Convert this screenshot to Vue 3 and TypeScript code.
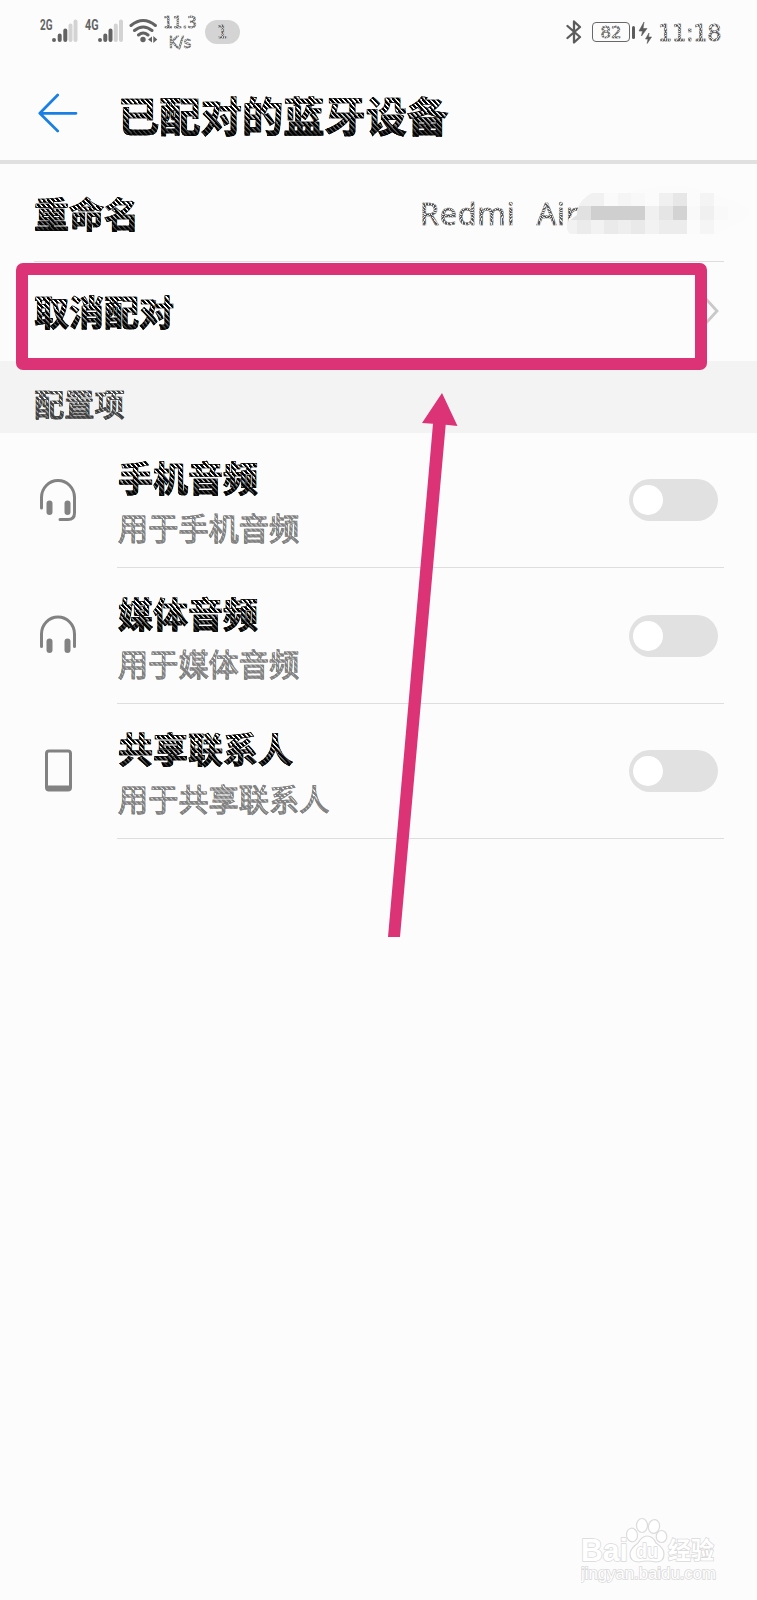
<script setup lang="ts">
import { ref } from 'vue'

interface Profile {
  id: string
  icon: 'headset' | 'headphones' | 'phone'
  title: string
  detail: string
  enabled: boolean
}

interface Cell {
  x: number
  y: number
  w: number
  h: number
  c: string
}

const profiles = ref<Profile[]>([
  { id: 'call', icon: 'headset', title: '手机音频', detail: '用于手机音频', enabled: false },
  { id: 'media', icon: 'headphones', title: '媒体音频', detail: '用于媒体音频', enabled: false },
  { id: 'contacts', icon: 'phone', title: '共享联系人', detail: '用于共享联系人', enabled: false },
])

const mosaic: Cell[] = [
  { x: 10, y: 0, w: 27, h: 13, c: '#f1f1f1' },
  { x: 37, y: 0, w: 14, h: 13, c: '#fafafa' },
  { x: 51, y: 0, w: 13, h: 13, c: '#f5f5f5' },
  { x: 64, y: 0, w: 14, h: 13, c: '#f8f8f8' },
  { x: 92, y: 0, w: 14, h: 13, c: '#f0f0f0' },
  { x: 106, y: 0, w: 14, h: 13, c: '#e7e7e7' },
  { x: 133, y: 0, w: 14, h: 13, c: '#f4f4f4' },
  { x: 0, y: 13, w: 24, h: 14, c: '#e1e1e1' },
  { x: 24, y: 13, w: 54, h: 14, c: '#cfcfcf' },
  { x: 78, y: 13, w: 14, h: 14, c: '#f0f0f0' },
  { x: 92, y: 13, w: 14, h: 14, c: '#e5e5e5' },
  { x: 106, y: 13, w: 14, h: 14, c: '#d3d3d3' },
  { x: 120, y: 13, w: 13, h: 14, c: '#f9f9f9' },
  { x: 133, y: 13, w: 14, h: 14, c: '#f0f0f0' },
  { x: 147, y: 13, w: 14, h: 14, c: '#f9f9f9' },
  { x: 0, y: 27, w: 10, h: 14, c: '#f2f2f2' },
  { x: 10, y: 27, w: 14, h: 14, c: '#ebebeb' },
  { x: 24, y: 27, w: 13, h: 14, c: '#f2f2f2' },
  { x: 37, y: 27, w: 14, h: 14, c: '#eaeaea' },
  { x: 51, y: 27, w: 13, h: 14, c: '#eeeeee' },
  { x: 64, y: 27, w: 14, h: 14, c: '#e9e9e9' },
  { x: 78, y: 27, w: 14, h: 14, c: '#f2f2f2' },
  { x: 92, y: 27, w: 28, h: 14, c: '#ececec' },
  { x: 133, y: 27, w: 14, h: 14, c: '#f5f5f5' },
]
</script>

<template>
  <div class="screen">
    <header class="status">
      <svg class="signals" width="120" height="30" viewBox="0 0 120 30">
        <g stroke-width="4" stroke-linecap="round" stroke="#636363">
          <path d="M14 22v.1M19.7 17.5v4.6M25.300 12.500v9.600" />
          <path d="M60 22v.1M65.300 17.500v4.600M70.500 12.500v9.600" />
          <path stroke="#d3d3d3" d="M30.500 7.500v14.600M35.500 3.500v18.600M75.800 7.500v14.600M81 3.500v18.600" />
        </g>
        <g fill="none" stroke="#636363" stroke-width="3" stroke-linecap="round">
          <path d="M91 7.500Q103.200-2.500 115.400 7.500M94.500 12.500Q103.200 5.500 112 12.500M98.500 17Q103.200 13 108 17" />
        </g>
        <circle cx="103" cy="21.500" r="2.700" fill="#636363" />
        <path d="M112 18.500v6l-4-3zM113.300 18v7l4-3.500z" fill="#636363" />
        <text x="0" y="11.700" class="net" textLength="12.500" lengthAdjust="spacingAndGlyphs">2G</text>
        <text x="45" y="11.700" class="net" textLength="13.500" lengthAdjust="spacingAndGlyphs">4G</text>
      </svg>
      <div class="speed"><span class="hatch-fine">11.3</span><span class="hatch-fine">K/s</span></div>
      <div class="pill"><span class="hatch-fine">1</span></div>
      <div class="spacer"></div>
      <svg class="bt" width="16" height="24" viewBox="0 0 16 24">
        <path d="M1.500 6L14 17 8 22.500V1.500L14 7 1.500 18" fill="none" stroke="#5c5c5c" stroke-width="2.300" stroke-linejoin="round" stroke-linecap="round" />
      </svg>
      <div class="battery"><span class="hatch-fine">82</span></div>
      <svg class="charge" width="20" height="22" viewBox="0 0 20 22">
        <rect x="0" y="4" width="3" height="13" rx="1.500" fill="#5c5c5c" />
        <path d="M12 0L7 9h3.500L9.500 14 15 6.500h-4zM17 11l-3.500 6h2.500l-.8 4.500L19.500 15h-3z" fill="#5c5c5c" stroke="#5c5c5c" stroke-width=".6" />
      </svg>
      <span class="clock hatch-fine">11:18</span>
    </header>

    <div class="titlebar">
      <svg class="back" width="40" height="40" viewBox="0 0 40 40">
        <path d="M38 20.300H2M19.700 2L1.800 20.300 19.700 38" fill="none" stroke="#1a7fe4" stroke-width="2.700" stroke-linecap="round" stroke-linejoin="round" />
      </svg>
      <h1 class="hatch">已配对的蓝牙设备</h1>
    </div>

    <main>
      <section class="row rename">
        <span class="label hatch">重命名</span>
        <span class="device hatch-fine">Redmi&nbsp; Air</span>
        <svg class="mosaic" width="185" height="70" viewBox="0 0 185 70">
          <path d="M10 30Q14 18 24 12H60Q100 0 132 8L178 24Q190 32 172 42L150 53H4Q-2 48 2 38Z" fill="#fbfbfb" />
          <clipPath id="smear"><path d="M0 42Q4 38 10 34 10 20 25 12H185V53H3Q-1 50 0 42Z" /></clipPath>
          <g clip-path="url(#smear)">
            <rect v-for="(cell, i) in mosaic" :key="i" :x="cell.x" :y="cell.y + 12" :width="cell.w" :height="cell.h" :fill="cell.c" />
          </g>
        </svg>
      </section>

      <section class="row unpair">
        <span class="label hatch">取消配对</span>
        <svg class="chevron" width="16" height="28" viewBox="0 0 16 28">
          <path d="M2 2l11 12L2 26" fill="none" stroke="#c9c9c9" stroke-width="2.800" />
        </svg>
      </section>

      <div class="section-head"><span class="hatch gray">配置项</span></div>

      <section v-for="p in profiles" :key="p.id" class="profile">
        <svg class="icon" width="38" height="44" viewBox="0 0 38 44">
          <template v-if="p.icon === 'headset'">
            <path d="M2.500 29V18.500a16.500 17 0 0 1 33 0V34q0 6.500-6.500 6.500H21" fill="none" stroke="#828282" stroke-width="3" stroke-linecap="round" />
            <rect x="7.500" y="21.500" width="6" height="14.500" rx="3" fill="#828282" />
            <rect x="25.500" y="21.500" width="6" height="14.500" rx="3" fill="#828282" />
          </template>
          <template v-else-if="p.icon === 'headphones'">
            <path d="M2.500 32.500V20a16.500 17 0 0 1 33 0V32.500" fill="none" stroke="#828282" stroke-width="3" stroke-linecap="round" />
            <rect x="7.500" y="24.500" width="6" height="14.500" rx="3" fill="#828282" />
            <rect x="25.500" y="24.500" width="6" height="14.500" rx="3" fill="#828282" />
          </template>
          <path v-else fill="#828282" fill-rule="evenodd" d="M10 .5h19q4 0 4 4v34q0 4-4 4H10q-4 0-4-4v-34q0-4 4-4zM10 3.500q-1 0-1 1v32h21v-32q0-1-1-1z" />
        </svg>
        <div class="body">
          <div class="texts">
            <span class="label hatch">{{ p.title }}</span>
            <span class="detail hatch light">{{ p.detail }}</span>
          </div>
          <button class="toggle" :class="{ on: p.enabled }" @click="p.enabled = !p.enabled"><i></i></button>
        </div>
      </section>
    </main>

    <div class="frame"></div>
    <svg class="arrow" width="80" height="550" viewBox="0 0 80 550">
      <path d="M62 3L77.500 36 65.700 34.800 20 547H8L53 33.800 42 33z" fill="#db3375" />
    </svg>

    <svg class="watermark" width="150" height="74" viewBox="0 0 150 74">
      <g fill="#fff" stroke="#dcdcdc" stroke-width="1.200">
        <ellipse cx="51" cy="25" rx="5.500" ry="6.800" transform="rotate(-8 51 25)" />
        <ellipse cx="61" cy="15.500" rx="5.500" ry="7" />
        <ellipse cx="73" cy="16.500" rx="5.500" ry="7" transform="rotate(10 73 16.500)" />
        <ellipse cx="80.500" cy="26.500" rx="5.300" ry="6" />
        <path d="M66 26q6 0 9 7 8 5 8 11 0 8-8 8-9-2-17 0-9 0-9-8 0-5 8-11 4-7 9-7z" />
      </g>
      <text x="0" y="50.500" class="wm big" textLength="47" lengthAdjust="spacingAndGlyphs">Bai</text>
      <text x="55" y="47.500" class="wm du" textLength="22" lengthAdjust="spacingAndGlyphs">du</text>
      <text x="87" y="49" class="wm cn" textLength="46" lengthAdjust="spacingAndGlyphs">经验</text>
      <text x="0" y="68.500" class="wm url" textLength="135" lengthAdjust="spacingAndGlyphs">jingyan.baidu.com</text>
    </svg>
  </div>
</template>

<style>
body {
  margin: 0;
  background: #fcfcfc;
}
</style>

<style scoped>
.screen {
  position: relative;
  width: 757px;
  height: 1600px;
  overflow: hidden;
  background: #fcfcfc;
  font-family: "Noto Sans CJK SC", sans-serif;
}
.hatch {
  --ink: #050505;
  color: transparent;
  background-image:
    linear-gradient(to bottom, transparent 40%, var(--ink) 100%),
    repeating-linear-gradient(48deg, var(--ink) 0 1.800px, #fff 2.400px 3.600px);
  -webkit-background-clip: text;
  background-clip: text;
  -webkit-text-stroke: 0.700px var(--ink);
}
.hatch.gray {
  --ink: #414141;
}
.hatch.light {
  --ink: #828282;
  -webkit-text-stroke-width: 0.900px;
}
.hatch-fine {
  color: transparent;
  background-image: repeating-conic-gradient(#505050 0 10deg, #ececec 12deg 18deg);
  background-size: 18px 100%;
  -webkit-background-clip: text;
  background-clip: text;
  -webkit-text-stroke: 0.600px #9a9a9a;
}
.status {
  display: flex;
  align-items: flex-start;
  height: 70px;
  box-sizing: border-box;
  padding: 0 35px 0 40px;
  font-family: "DejaVu Sans", sans-serif;
}
.signals {
  flex: none;
  margin-top: 18px;
}
.net {
  font: bold 14px Roboto, sans-serif;
  fill: #636363;
}
.speed {
  display: flex;
  flex-direction: column;
  align-items: center;
  width: 34px;
  margin: 13px 0 0 3px;
  font-size: 15px;
  line-height: 20px;
}
.pill {
  width: 35px;
  height: 24px;
  margin: 20px 0 0 8px;
  border-radius: 12px;
  background: #d4d4d4;
  text-align: center;
  font-size: 18px;
  line-height: 24px;
}
.spacer {
  flex: 1;
}
.bt {
  margin: 20px 10px 0 0;
}
.battery {
  box-sizing: border-box;
  width: 38px;
  height: 20px;
  margin-top: 22px;
  border: 1.500px solid #686868;
  border-radius: 4px;
  text-align: center;
  font-size: 16.500px;
  line-height: 19px;
}
.charge {
  margin: 22px 6px 0 2px;
}
.clock {
  width: 64px;
  margin-top: 19px;
  font-size: 22.500px;
  line-height: 28px;
  letter-spacing: -0.300px;
}
.titlebar {
  display: flex;
  align-items: center;
  height: 94px;
  box-sizing: border-box;
  padding: 0 0 3px 38px;
  border-bottom: 4px solid #e0e0e0;
}
.back {
  margin: -1px 40px 0 0;
}
h1 {
  margin: 0;
  font-size: 41.300px;
  line-height: 50px;
  font-weight: 700;
}
.label {
  font-size: 35px;
  line-height: 42px;
  font-weight: 700;
}
.row {
  display: flex;
  align-items: center;
  box-sizing: border-box;
  height: 98px;
  margin: 0 33px 0 34px;
}
.rename {
  position: relative;
  border-bottom: 1px solid #dedede;
}
.rename .label {
  margin-top: 1px;
}
.device {
  width: 160px;
  margin-left: 281px;
  font-family: "Noto Sans", sans-serif;
  font-size: 30.500px;
  line-height: 40px;
  letter-spacing: 0.800px;
  word-spacing: 2px;
  white-space: nowrap;
}
.mosaic {
  position: absolute;
  left: 533px;
  top: 17px;
}
.unpair {
  height: 99px;
  justify-content: space-between;
}
.unpair .label {
  margin-top: -1px;
}
.unpair .chevron {
  margin: -1px 4px 0 0;
}
.section-head {
  display: flex;
  align-items: center;
  height: 72px;
  padding: 12px 0 0 34px;
  box-sizing: border-box;
  background: #f3f3f3;
  font-size: 30.200px;
  line-height: 40px;
  font-weight: 500;
}
.profile {
  display: flex;
  align-items: center;
  height: 135.400px;
  padding: 0 33px 0 39px;
}
.icon {
  flex: none;
  margin-right: 40px;
}
.body {
  display: flex;
  flex: 1;
  align-items: center;
  justify-content: space-between;
  box-sizing: border-box;
  height: 100%;
  padding: 0 6px 0 1px;
  border-bottom: 1px solid #dedede;
}
.texts {
  display: flex;
  flex-direction: column;
  align-items: flex-start;
  gap: 8px;
  margin-top: 4px;
}
.detail {
  font-size: 30.200px;
  line-height: 42px;
  font-weight: 400;
}
.toggle {
  width: 89px;
  height: 42px;
  padding: 0 4px;
  border: 0;
  border-radius: 21px;
  background: #e1e1e1;
  display: flex;
  align-items: center;
}
.toggle.on {
  justify-content: flex-end;
  background: #1a7fe4;
}
.toggle i {
  width: 30px;
  height: 30px;
  border-radius: 50%;
  background: #fff;
}
.frame {
  position: absolute;
  left: 16px;
  top: 263px;
  width: 691px;
  height: 107px;
  box-sizing: border-box;
  border: 12px solid #db3375;
  border-radius: 7px;
}
.arrow {
  position: absolute;
  left: 380px;
  top: 390px;
}
.watermark {
  position: absolute;
  left: 581px;
  top: 1510px;
}
.wm {
  fill: #fff;
  stroke: #d9d9d9;
  stroke-width: 1.500px;
  paint-order: stroke;
  font-family: "Liberation Sans", sans-serif;
  font-weight: 700;
}
.wm.big {
  font-size: 31px;
}
.wm.du {
  font-size: 20px;
}
.wm.cn {
  font-family: "Noto Sans CJK SC", sans-serif;
  font-size: 24px;
}
.wm.url {
  font-size: 16px;
  font-weight: 400;
}
</style>
